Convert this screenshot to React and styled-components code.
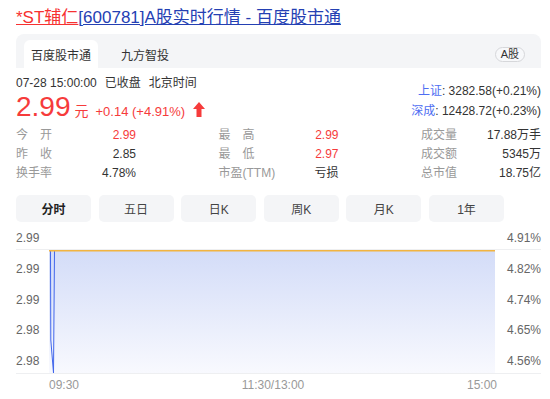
import React from "react";
import styled, { createGlobalStyle } from "styled-components";

const GlobalStyle = createGlobalStyle`
  html, body {
    margin: 0;
    padding: 0;
    background: #fff;
  }
  body {
    font-family: "Liberation Sans", "Noto Sans CJK SC", sans-serif;
    color: #333;
  }
`;

const RED = "#f63b3b";

const Page = styled.div`
  width: 525px;
  padding: 8px 9px 0 16px;
`;

const Title = styled.div`
  font-size: 17px;
  line-height: 20px;
  white-space: nowrap;
`;

const TitleLink = styled.a`
  color: ${(p) => (p.$red ? "#f73131" : "#2440b3")};
  text-decoration: underline;
`;

const TabPanel = styled.div`
  margin-top: 6px;
  height: 28px;
  padding: 6px 16px 0 8px;
  display: flex;
  align-items: flex-end;
  gap: 16px;
  background: #f4f5f7;
  border-radius: 8px 8px 0 0;
`;

const Tab = styled.div`
  height: 28px;
  padding: 0 7px;
  display: flex;
  align-items: center;
  font-size: 12px;
  color: #333;
  background: ${(p) => (p.$active ? "#fff" : "transparent")};
  border-radius: 6px 6px 0 0;
`;

const Pill = styled.span`
  margin-left: auto;
  align-self: center;
  height: 13px;
  padding: 0 5px;
  border: 1px solid #d6d7da;
  border-radius: 8px;
  background: #f7f8fa;
  font-size: 11px;
  line-height: 13px;
  color: #333;
`;

const Header = styled.div`
  margin-top: 7px;
  display: flex;
  justify-content: space-between;
`;

const DateLine = styled.div`
  font-size: 12px;
  line-height: 17px;
  color: #333;
  display: flex;
  gap: 8px;
`;

const PriceRow = styled.div`
  display: flex;
  align-items: baseline;
  height: 30px;
  color: ${RED};
`;

const Price = styled.span`
  font-size: 28px;
  line-height: 30px;
`;

const Unit = styled.span`
  font-size: 14px;
  margin-left: 4px;
`;

const Change = styled.span`
  font-size: 13px;
  margin-left: 7px;
`;

const Arrow = styled.svg`
  align-self: center;
  margin-left: 8px;
  margin-top: 4px;
`;

const IndexBox = styled.div`
  padding-top: 6px;
  display: flex;
  flex-direction: column;
  align-items: flex-end;
`;

const IndexLine = styled.div`
  font-size: 12px;
  line-height: 20px;
  color: #333;
`;

const IndexName = styled.span`
  color: #4e6ef2;
`;

const Stats = styled.div`
  margin-top: 4px;
  display: grid;
  grid-template-columns: repeat(3, 120px);
  grid-auto-rows: 19px;
  justify-content: space-between;
`;

const Stat = styled.div`
  display: flex;
  justify-content: space-between;
  font-size: 12px;
  line-height: 19px;
`;

const StatLabel = styled.span`
  color: #999;
`;

const StatValue = styled.span`
  color: ${(p) => (p.$red ? RED : "#333")};
`;

const Periods = styled.div`
  margin-top: 12px;
  display: grid;
  grid-template-columns: repeat(6, 75px);
  gap: 7.6px;
`;

const Period = styled.div`
  height: 27px;
  display: flex;
  align-items: center;
  justify-content: center;
  border-radius: 5px;
  background: #f4f5f7;
  font-size: 12px;
  font-weight: ${(p) => (p.$active ? 700 : 400)};
  color: ${(p) => (p.$active ? "#222" : "#444")};
`;

const ChartHead = styled.div`
  margin-top: 6px;
  height: 21px;
  display: flex;
  justify-content: space-between;
  font-size: 12px;
  line-height: 21px;
  color: #666;
`;

const PlotRow = styled.div`
  display: grid;
  grid-template-columns: 33px 446px 1fr;
  height: 123px;
  border-top: 1px solid #eeeff1;
  border-bottom: 1px solid #eeeff1;
`;

const Axis = styled.div`
  display: flex;
  flex-direction: column;
`;

const AxisCell = styled.div`
  flex: 1;
  display: flex;
  align-items: flex-end;
  justify-content: ${(p) => (p.$right ? "flex-end" : "flex-start")};
  padding-bottom: 1px;
  font-size: 12px;
  line-height: 21px;
  color: #666;
`;

const XAxis = styled.div`
  display: grid;
  grid-template-columns: 33px 446px 1fr;
`;

const XLabels = styled.div`
  grid-column: 2;
  display: flex;
  justify-content: space-between;
  margin-right: -2px;
  font-size: 12px;
  line-height: 22px;
  color: #999;
`;

const stats = [
  ["今　开", "2.99", true],
  ["最　高", "2.99", true],
  ["成交量", "17.88万手", false],
  ["昨　收", "2.85", false],
  ["最　低", "2.97", true],
  ["成交额", "5345万", false],
  ["换手率", "4.78%", false],
  ["市盈(TTM)", "亏损", false],
  ["总市值", "18.75亿", false],
];

const periods = ["分时", "五日", "日K", "周K", "月K", "1年"];

const leftAxis = ["2.99", "2.99", "2.98", "2.98"];
const rightAxis = ["4.82%", "4.74%", "4.65%", "4.56%"];

const Plot = () => (
  <svg width="446" height="123" style={{ display: "block" }}>
    <defs>
      <linearGradient id="area" x1="0" y1="0" x2="0" y2="1">
        <stop offset="0" stopColor="#d3dcf8" />
        <stop offset="1" stopColor="#f8f9fe" />
      </linearGradient>
    </defs>
    <rect x="0" y="0" width="446" height="123" fill="url(#area)" />
    <polyline
      points="1.5,0 1.8,90 4.5,123 5.5,0"
      fill="none"
      stroke="#4166ec"
      strokeWidth="1"
    />
    <line x1="0" y1="0.75" x2="446" y2="0.75" stroke="#f2b441" strokeWidth="1.5" />
  </svg>
);

export default function App() {
  return (
    <Page>
      <GlobalStyle />
      <Title>
        <TitleLink $red>*ST辅仁</TitleLink>
        <TitleLink>[600781]A股实时行情 - 百度股市通</TitleLink>
      </Title>

      <TabPanel>
        <Tab $active>百度股市通</Tab>
        <Tab>九方智投</Tab>
        <Pill>A股</Pill>
      </TabPanel>

      <Header>
        <div>
          <DateLine>
            <span>07-28 15:00:00</span>
            <span>已收盘</span>
            <span>北京时间</span>
          </DateLine>
          <PriceRow>
            <Price>2.99</Price>
            <Unit>元</Unit>
            <Change>+0.14 (+4.91%)</Change>
            <Arrow width="12" height="15" viewBox="0 0 12 15">
              <polygon points="6,0 12,7 8.5,7 8.5,15 3.5,15 3.5,7 0,7" fill={RED} />
            </Arrow>
          </PriceRow>
        </div>
        <IndexBox>
          <IndexLine>
            <IndexName>上证</IndexName>: 3282.58(+0.21%)
          </IndexLine>
          <IndexLine>
            <IndexName>深成</IndexName>: 12428.72(+0.23%)
          </IndexLine>
        </IndexBox>
      </Header>

      <Stats>
        {stats.map(([label, value, red]) => (
          <Stat key={label}>
            <StatLabel>{label}</StatLabel>
            <StatValue $red={red}>{value}</StatValue>
          </Stat>
        ))}
      </Stats>

      <Periods>
        {periods.map((p, i) => (
          <Period key={p} $active={i === 0}>
            {p}
          </Period>
        ))}
      </Periods>

      <ChartHead>
        <span>2.99</span>
        <span>4.91%</span>
      </ChartHead>
      <PlotRow>
        <Axis>
          {leftAxis.map((v, i) => (
            <AxisCell key={i}>{v}</AxisCell>
          ))}
        </Axis>
        <Plot />
        <Axis>
          {rightAxis.map((v) => (
            <AxisCell key={v} $right>
              {v}
            </AxisCell>
          ))}
        </Axis>
      </PlotRow>
      <XAxis>
        <XLabels>
          <span>09:30</span>
          <span>11:30/13:00</span>
          <span>15:00</span>
        </XLabels>
      </XAxis>
    </Page>
  );
}
